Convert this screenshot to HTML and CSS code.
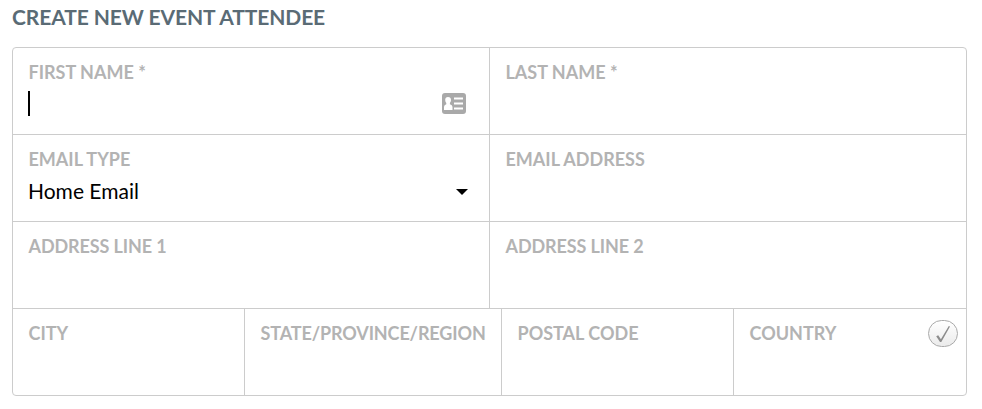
FILE: index.html
```html
<!DOCTYPE html>
<html lang="en">
<head>
<meta charset="utf-8">
<title>Create New Event Attendee</title>
<link rel="stylesheet" href="styles.css">
</head>
<body>
<h1 class="title">CREATE NEW EVENT ATTENDEE</h1>
<form class="form">
  <div class="row halves">
    <div class="field"><label class="label">FIRST NAME *</label>
      <div class="value"><span class="caret"></span>
        <svg class="card" width="24" height="21" viewBox="0 0 24 21"><rect width="24" height="21" rx="3" fill="#a9a9a9"/><path d="M6 4c2 0 3 1.300 3 3 0 1.200-.5 2.200-1.100 2.900v1.300c1.500.6 2.600 1.300 2.600 3.100V17H2v-2.700c0-1.800 1-2.500 2.300-3.100V9.900C3.600 9.200 3.200 8.200 3.200 7c0-1.700.9-3 2.800-3z" fill="#fff"/><path d="M12 5.500h9M12 10.500h9M12 15.500h9" stroke="#fff" stroke-width="2"/></svg>
      </div></div>
    <div class="field"><label class="label">LAST NAME *</label></div>
  </div>
  <div class="row halves">
    <div class="field"><label class="label">EMAIL TYPE</label>
      <div class="value"><span>Home Email</span><svg class="arrow" width="12" height="6" viewBox="0 0 12 6"><path d="M0 0h12L6 6z"/></svg></div></div>
    <div class="field"><label class="label">EMAIL ADDRESS</label></div>
  </div>
  <div class="row halves">
    <div class="field"><label class="label tight">ADDRESS LINE 1</label></div>
    <div class="field"><label class="label tight">ADDRESS LINE 2</label></div>
  </div>
  <div class="row quarters">
    <div class="field"><label class="label">CITY</label></div>
    <div class="field"><label class="label tight">STATE/PROVINCE/REGION</label></div>
    <div class="field"><label class="label">POSTAL CODE</label></div>
    <div class="field country"><label class="label">COUNTRY</label>
      <span class="check"><svg width="16" height="18" viewBox="0 0 16 18"><path d="M1.200 11.200L3.200 10.200L5.900 14.200L13.800 1L15 1.500L6.300 17H5z" fill="#8c8c8c"/></svg></span></div>
  </div>
</form>
</body>
</html>
```
FILE: styles.css
```css
* { box-sizing: border-box; }
body { margin: 0; padding: 4px 12px 0; background: #fff; font-family: Lato, sans-serif; }
.title { margin: 0 0 18px; font-size: 21px; line-height: 25px; font-weight: 700; letter-spacing: -0.1px; color: #5a6b75; white-space: nowrap; }
.form { width: 955px; border: 1px solid #ccc; border-radius: 4px; }
.row { display: grid; height: 87px; border-bottom: 1px solid #ccc; }
.row:last-child { height: 86px; border-bottom: 0; }
.halves { grid-template-columns: 477px 476px; }
.quarters { grid-template-columns: 232px 257px 232px 232px; }
.field { padding: 13px 15px 0; border-right: 1px solid #ccc; white-space: nowrap; }
.field:last-child { border-right: 0; }
.label { display: block; padding-left: 0.5px; font-size: 18px; line-height: 22px; font-weight: 700; color: #b3b3b3; }
.tight { letter-spacing: -0.12px; }
.value { display: flex; justify-content: space-between; align-items: center; height: 28px; margin-top: 6px; padding-right: 5px; font-size: 21px; color: #000; }
.caret { width: 2px; height: 25px; background: #000; }
.card { margin: 1px 3px 0 0; }
.arrow { margin: 4px 1px 0 0; }
.country { display: flex; justify-content: space-between; align-items: flex-start; padding-right: 8px; }
.check { display: flex; align-items: center; justify-content: center; width: 30px; height: 27px; margin-top: -2px; border: 1px solid #aaa; border-radius: 14px; background: linear-gradient(#fff, #ebebeb); }
```
